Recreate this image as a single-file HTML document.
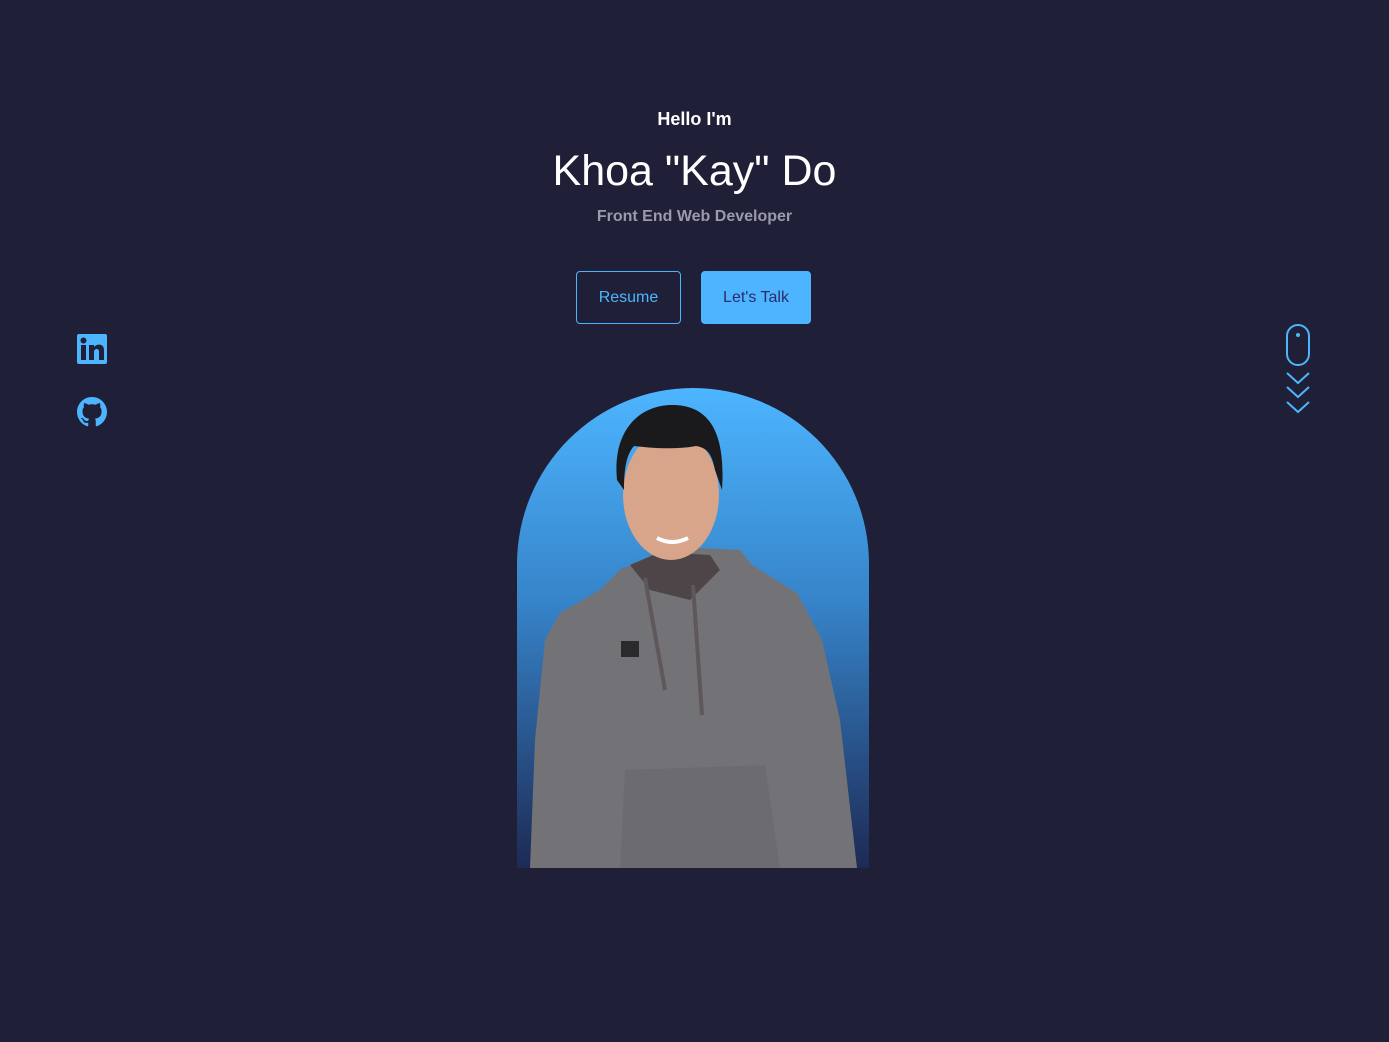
<!DOCTYPE html>
<html><head><style>
html,body{margin:0;padding:0;width:1389px;height:1042px;overflow:hidden;background:#1f1f38;font-family:"Liberation Sans",sans-serif;}
.t{position:absolute;left:0;width:1389px;text-align:center;color:#fff;}
.btn{position:absolute;top:271px;height:53px;box-sizing:border-box;border-radius:4px;font-size:16px;line-height:51px;text-align:center;}
</style></head><body>
<div class="t" style="top:109px;font-size:18px;font-weight:bold;">Hello I'm</div>
<div class="t" style="top:147px;font-size:43px;">Khoa "Kay" Do</div>
<div class="t" style="top:208px;font-size:16px;font-weight:bold;color:#9a9aac;">Front End Web Developer</div>
<div class="btn" style="left:576px;width:105px;border:1px solid #4db5ff;color:#4db5ff;">Resume</div>
<div class="btn" style="left:701px;width:110px;background:#4db5ff;color:#2c2c6c;border:1px solid #4db5ff;">Let's Talk</div>

<svg style="position:absolute;left:77px;top:334px" width="30" height="30" viewBox="0 0 30 30">
<rect width="30" height="30" rx="2" fill="#4db5ff"/>
<rect x="4" y="11" width="5" height="15" fill="#1f1f38"/><circle cx="6.5" cy="6.5" r="3" fill="#1f1f38"/>
<path d="M12 11h5v2c1-1.6 3-2.4 5-2.4 4 0 5 2.5 5 6V26h-5v-8c0-2-.6-3-2.300-3S17 16.3 17 18v8h-5z" fill="#1f1f38"/>
</svg>
<svg style="position:absolute;left:77px;top:397px" width="30" height="30" viewBox="0 0 16 16">
<path fill="#4db5ff" d="M8 0C3.58 0 0 3.58 0 8c0 3.540 2.29 6.53 5.47 7.59.4.07.55-.17.55-.38 0-.19-.01-.82-.01-1.49-2.01.37-2.53-.49-2.69-.94-.09-.23-.48-.94-.82-1.13-.28-.15-.68-.52-.01-.53.63-.01 1.08.58 1.23.82.72 1.21 1.87.87 2.33.66.07-.52.28-.87.51-1.07-1.78-.2-3.64-.89-3.64-3.95 0-.87.31-1.59.82-2.150-.08-.2-.36-1.02.08-2.12 0 0 .67-.21 2.2.82.64-.18 1.32-.27 2-.27.68 0 1.36.09 2 .27 1.53-1.04 2.2-.82 2.2-.82.44 1.1.16 1.92.08 2.12.51.56.82 1.27.82 2.15 0 3.07-1.87 3.75-3.65 3.95.29.25.54.73.54 1.48 0 1.07-.01 1.93-.01 2.2 0 .21.15.46.55.38A8.013 8.013 0 0016 8c0-4.42-3.58-8-8-8z"/>
</svg>

<svg style="position:absolute;left:1284px;top:322px" width="30" height="95" viewBox="0 0 30 95">
<rect x="3" y="3" width="22" height="40" rx="11" fill="none" stroke="#4db5ff" stroke-width="2"/>
<circle cx="14" cy="13" r="2" fill="#4db5ff"/>
<path d="M3 51l11 10 11-10M3 65l11 10 11-10M3 80l11 10 11-10" fill="none" stroke="#4db5ff" stroke-width="2"/>
</svg>

<svg style="position:absolute;left:0;top:0" width="1389" height="1042">
<defs>
<linearGradient id="g" x1="0" y1="0" x2="0" y2="1">
<stop offset="0" stop-color="#4db5ff"/><stop offset="0.45" stop-color="#3683c8"/><stop offset="1" stop-color="#1d2a55"/>
</linearGradient>
<clipPath id="c"><path d="M517 868V564A176 176 0 0 1 869 564V868Z"/></clipPath>
</defs>
<path d="M517 868V564A176 176 0 0 1 869 564V868Z" fill="url(#g)"/>
<g clip-path="url(#c)">
<path d="M530 868L535 740L545 640L560 613L600 590L622 568L700 548L740 550L752 565L797 593L822 640L840 720L857 868Z" fill="#737377"/>
<path d="M630 565L650 590L690 600L720 570L710 555L660 552Z" fill="#4e4548"/>
<ellipse cx="671" cy="495" rx="48" ry="65" fill="#d8a48a"/>
<path d="M617 480C612 430 640 405 672 405C708 405 726 430 722 490L715 470C712 455 708 448 696 446C675 450 650 448 634 446C626 455 624 470 624 490Z" fill="#1a1a1c"/>
<path d="M657 538Q672 546 688 538" stroke="#fff" stroke-width="4" fill="none"/>
<rect x="621" y="641" width="18" height="16" fill="#2a2a2c"/>
<path d="M645 578L665 690M693 585L702 715" stroke="#5e585c" stroke-width="4"/>
<path d="M625 770L765 765L780 868L620 868Z" fill="#6c6c70"/>
</g>
</svg>
</body></html>
